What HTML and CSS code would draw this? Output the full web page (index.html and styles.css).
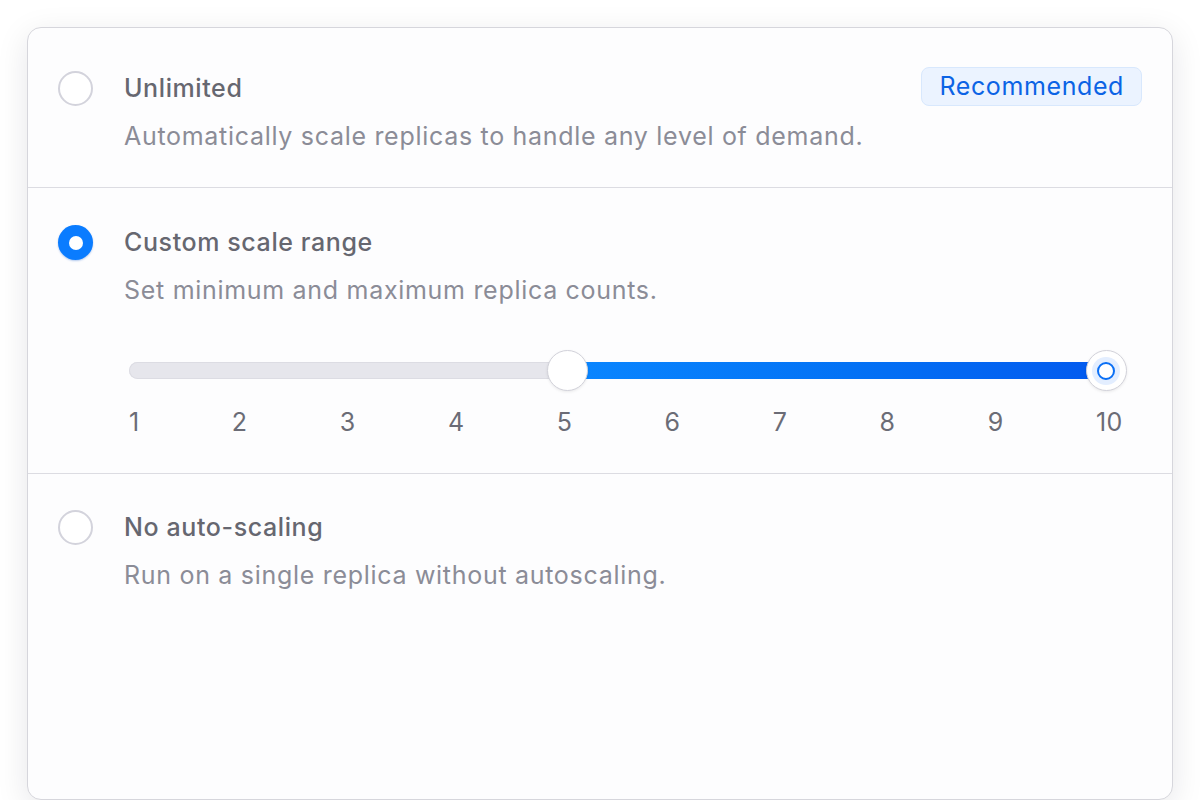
FILE: index.html
```html
<!DOCTYPE html>
<html lang="en">
<head>
<meta charset="utf-8">
<title>Scaling</title>
<link rel="stylesheet" href="styles.css">
</head>
<body>
<div class="card">
  <div class="option option-first">
    <span class="radio"></span>
    <div class="body">
      <div class="head">
        <span class="title">Unlimited</span>
        <span class="badge">Recommended</span>
      </div>
      <div class="desc">Automatically scale replicas to handle any level of demand.</div>
    </div>
  </div>
  <div class="option">
    <span class="radio radio-on"></span>
    <div class="body">
      <div class="head"><span class="title">Custom scale range</span></div>
      <div class="desc">Set minimum and maximum replica counts.</div>
      <div class="slider">
        <div class="track">
          <div class="rail">
            <div class="fill" style="left: 44.44%; right: -17px;"></div>
            <span class="thumb" style="left: 44.44%;"></span>
            <span class="thumb thumb-active" style="left: 100%;"></span>
          </div>
        </div>
        <div class="ticks">
          <span>1</span><span>2</span><span>3</span><span>4</span><span>5</span><span>6</span><span>7</span><span>8</span><span>9</span><span>10</span>
        </div>
      </div>
    </div>
  </div>
  <div class="option option-last">
    <span class="radio"></span>
    <div class="body">
      <div class="head"><span class="title">No auto-scaling</span></div>
      <div class="desc">Run on a single replica without autoscaling.</div>
    </div>
  </div>
</div>
</body>
</html>
```
FILE: styles.css
```css
* { box-sizing: border-box; }
html, body { margin: 0; padding: 0; }
body {
  background: #ffffff;
  font-family: Inter, "Noto Sans", sans-serif;
  width: 1200px;
  height: 800px;
  overflow: hidden;
  padding: 27px 27px 0 27px;
}
.card {
  height: 773px;
  background: #fdfdfe;
  border: 1.5px solid #d6d6dc;
  border-radius: 14px;
  box-shadow: 0 8px 32px rgba(20, 20, 40, 0.10);
  display: flex;
  flex-direction: column;
}
.option {
  display: flex;
  align-items: flex-start;
  gap: 31px;
  padding: 36px 30px 33px 30px;
  border-bottom: 1.5px solid #dcdce2;
}
.option-first { padding-top: 42px; }
.option-last { border-bottom: none; flex: 1; padding-top: 35px; }
.radio {
  flex: none;
  width: 35px;
  height: 35px;
  border-radius: 50%;
  border: 2px solid #d3d3dc;
  background: #fff;
  margin-top: 1px;
  position: relative;
}
.radio-on {
  border: none;
  background: #0a7cff;
  box-shadow: 0 1px 2px rgba(0, 80, 200, 0.3);
}
.radio-on::after {
  content: "";
  position: absolute;
  left: 10.5px;
  top: 10.5px;
  width: 14px;
  height: 14px;
  border-radius: 50%;
  background: #fff;
}
.body { flex: 1; min-width: 0; }
.head {
  display: flex;
  align-items: center;
  justify-content: space-between;
  height: 36px;
}
.title {
  font-size: 25px;
  font-weight: 500;
  letter-spacing: 0.6px;
  color: #666770;
  line-height: 36px;
}
.badge {
  font-size: 25px;
  letter-spacing: 0.6px;
  line-height: 37px;
  color: #0b63e5;
  background: #ebf3ff;
  border: 1.5px solid #d8e8fd;
  border-radius: 8px;
  padding: 0 17px;
  margin-top: -4px;
}
.desc {
  margin-top: 12px;
  font-size: 25px;
  letter-spacing: 0.7px;
  line-height: 36px;
  color: #8b8c97;
}
.slider {
  margin-top: 54px;
  padding-right: 19px;
}
.track {
  position: relative;
  height: 17px;
  margin-left: 5px;
  border-radius: 9px;
  background: #e6e6ec;
  box-shadow: inset 0 0 0 1px #dcdce3;
  padding: 0 17px 0 8px;
}
.rail {
  position: relative;
  height: 100%;
}
.fill {
  position: absolute;
  top: 0;
  bottom: 0;
  background: linear-gradient(90deg, #0a86ff 0%, #0372f5 50%, #0358ee 100%);
  border-radius: 0 9px 9px 0;
}
.thumb {
  position: absolute;
  top: 50%;
  width: 41px;
  height: 41px;
  margin-left: -20.5px;
  margin-top: -20.5px;
  border-radius: 50%;
  background: #fff;
  border: 1.5px solid #d2d2da;
  box-shadow: 0 1px 3px rgba(0, 0, 0, 0.08);
}
.thumb-active::before {
  content: "";
  position: absolute;
  left: 50%;
  top: 50%;
  width: 28px;
  height: 28px;
  margin: -14px 0 0 -14px;
  border-radius: 50%;
  background: #e3eeff;
}
.thumb-active::after {
  content: "";
  position: absolute;
  left: 50%;
  top: 50%;
  width: 18px;
  height: 18px;
  margin: -9px 0 0 -9px;
  border-radius: 50%;
  background: #fff;
  border: 2px solid #0a6ff5;
  box-sizing: border-box;
}
.ticks {
  display: flex;
  justify-content: space-between;
  margin-top: 25px;
  padding-left: 5px;
  font-size: 25px;
  letter-spacing: 0.5px;
  line-height: 36px;
  color: #6b6c76;
}
```
